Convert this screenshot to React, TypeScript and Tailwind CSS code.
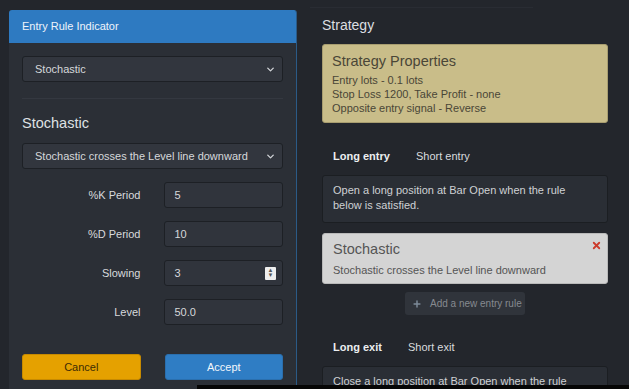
import { ChevronDown, Plus, X } from "lucide-react";

const font = { fontFamily: '"Liberation Sans", Arial, sans-serif' };

const params = [
  { label: "%K Period", value: "5" },
  { label: "%D Period", value: "10" },
  { label: "Slowing", value: "3", spinner: true },
  { label: "Level", value: "50.0" },
];

function Select({ value }: { value: string }) {
  return (
    <div className="flex h-[26px] items-center justify-between whitespace-nowrap rounded-[3px] border border-[#1d2025] bg-[#32363e] pl-[12px] pr-[6px] text-[11px] text-[#d6d8db]">
      <span>{value}</span>
      <ChevronDown className="size-[11px] text-[#cfd2d6]" strokeWidth={3} />
    </div>
  );
}

function Tabs({ active, other, width }: { active: string; other: string; width: string }) {
  return (
    <div className="flex h-[18px] items-center pl-[11px] text-[11px]">
      <span className={`${width} font-bold text-[#eceef0]`}>{active}</span>
      <span className="text-[#d9dbde]">{other}</span>
    </div>
  );
}

export default function App() {
  return (
    <div className="relative flex h-[389px] w-[629px] overflow-hidden bg-[#23262c]" style={font}>
      <div className="w-[310px] shrink-0 pl-[9px] pt-[10px]">
        <div className="h-[400px] w-[288px] overflow-hidden rounded-t-[3px] border-r border-[#2b5a86] bg-[#2b2f36]">
          <div className="flex h-[33px] items-center bg-[#2e7ac1] pl-[13px] text-[11px] text-[#eef4fb]">Entry Rule Indicator</div>
          <div className="px-[13px] pt-[13px]">
            <Select value="Stochastic" />
            <div className="mt-[16px] h-px bg-[#343840]" />
            <div className="mt-[15px] text-[14.5px] leading-[18px] text-[#dfe1e4]">Stochastic</div>
            <div className="mt-[11px]">
              <Select value="Stochastic crosses the Level line downward" />
            </div>
            <div className="mt-[13px] flex flex-col gap-[13px]">
              {params.map((p) => (
                <div key={p.label} className="flex items-center">
                  <span className="w-[119px] text-right text-[11px] text-[#d8dadd]">{p.label}</span>
                  <div className="ml-[24px] flex h-[26px] w-[119px] items-center justify-between rounded-[3px] border border-[#1d2025] bg-[#30343c] pl-[9px] pr-[6px] text-[11px] text-[#d6d8db]">
                    <span>{p.value}</span>
                    {p.spinner && (
                      <span className="flex h-[13px] w-[11px] flex-col items-center justify-center rounded-[1px] bg-[#eeeeee] text-[6px] leading-[5px] text-[#555]">
                        <span>▲</span>
                        <span>▼</span>
                      </span>
                    )}
                  </div>
                </div>
              ))}
            </div>
            <div className="mt-[29px] flex gap-[24px]">
              <button type="button" className="h-[26px] w-[119px] rounded-[3px] border border-[#c78a00] bg-[#e5a100] text-[11px] text-[#3d2b05]">
                Cancel
              </button>
              <button type="button" className="h-[26px] w-[119px] rounded-[3px] border border-[#2a6fae] bg-[#2f7dc4] text-[11px] text-[#f2f6fb]">
                Accept
              </button>
            </div>
          </div>
        </div>
      </div>

      <div className="flex-1 pl-[12px] pr-[21px]">
        <div className="ml-[-12px] mt-[7px] h-px w-[223px] bg-[#292c33]" />
        <div className="pl-[-1px] pt-[8px] text-[14px] leading-[18px] text-[#dcdee1]">Strategy</div>
        <div className="mt-[10px] h-[79px] rounded-[3px] border border-[#a89d70] bg-[#c9bd89] px-[9px] pt-[6px] text-[#4a4637]">
          <div className="text-[14.5px] leading-[20px]">Strategy Properties</div>
          <div className="mt-[2px] text-[11px] leading-[14px]">
            <div>Entry lots - 0.1 lots</div>
            <div>Stop Loss 1200, Take Profit - none</div>
            <div>Opposite entry signal - Reverse</div>
          </div>
        </div>
        <div className="mt-[24px]">
          <Tabs active="Long entry" other="Short entry" width="w-[83px]" />
        </div>
        <div className="mt-[10px] h-[48px] rounded-[3px] border border-[#1b1e22] bg-[#2a2e35] px-[10px] pt-[7px] text-[11px] leading-[15px] text-[#cfd1d4]">
          Open a long position at Bar Open when the rule below is satisfied.
        </div>
        <div className="relative mt-[10px] h-[51px] rounded-[3px] border border-[#b9b9b9] bg-[#d4d4d4] px-[10px] pt-[6px] text-[#555]">
          <div className="text-[14.5px] leading-[18px]">Stochastic</div>
          <div className="mt-[5px] text-[11px] leading-[14px]">Stochastic crosses the Level line downward</div>
          <X className="absolute right-[5px] top-[6px] size-[11px] text-[#cc3b2c]" strokeWidth={4} />
        </div>
        <div className="mt-[8px] flex justify-center">
          <div className="flex h-[23px] w-[120px] items-center whitespace-nowrap rounded-[3px] bg-[#30343b] pl-[7px] text-[10px] text-[#868a90]">
            <Plus className="mr-[8px] size-[10px] text-[#7d8b99]" strokeWidth={3.5} />
            Add a new entry rule
          </div>
        </div>
        <div className="mt-[23px]">
          <Tabs active="Long exit" other="Short exit" width="w-[75px]" />
        </div>
        <div className="mt-[10px] h-[48px] rounded-[3px] border border-[#1b1e22] bg-[#2a2e35] px-[10px] pt-[7px] text-[11px] leading-[15px] text-[#cfd1d4]">
          Close a long position at Bar Open when the rule
        </div>
      </div>

      <div className="absolute bottom-0 left-[197px] h-[4px] w-[432px] bg-[#060606]" />
    </div>
  );
}
